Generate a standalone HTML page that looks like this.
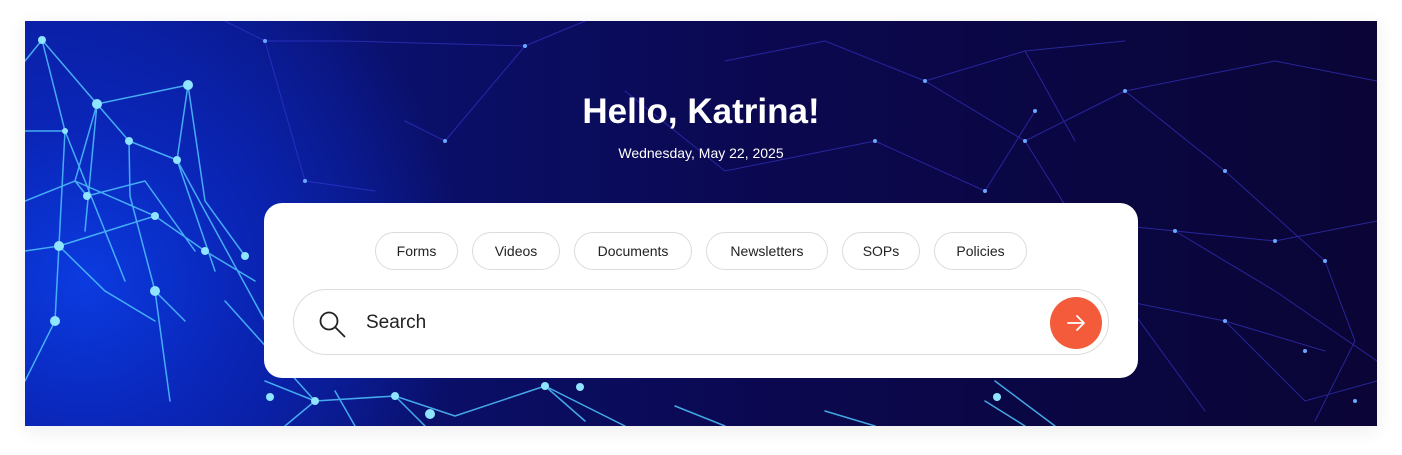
<!DOCTYPE html>
<html><head><meta charset="utf-8"><style>
*{margin:0;padding:0;box-sizing:border-box}
body{width:1402px;height:455px;background:#fff;font-family:"Liberation Sans",sans-serif;position:relative;overflow:hidden}
.banner{position:absolute;left:25px;top:21px;width:1352px;height:405px;overflow:hidden;
background:radial-gradient(ellipse 380px 380px at 60px 260px,#0b3be0 0%,#0a26b8 40%,rgba(10,20,120,0) 100%),linear-gradient(90deg,#0a1a98 0%,#0a0f68 30%,#0b0850 55%,#0a0535 100%);
box-shadow:0 4px 18px rgba(0,0,0,.08)}
svg.net{position:absolute;left:0;top:0}
h1{position:absolute;left:0;width:1402px;top:92px;text-align:center;color:#fff;font-size:35px;font-weight:bold}
.date{position:absolute;left:0;width:1402px;top:145px;text-align:center;color:#fff;font-size:14px}
.card{position:absolute;left:264px;top:203px;width:874px;height:175px;background:#fff;border-radius:18px}
.pill{position:absolute;top:29px;height:38px;border:1px solid #dcdcdc;border-radius:19px;font-size:14px;color:#222;display:flex;align-items:center;justify-content:center}
.search{position:absolute;left:29px;top:86px;width:816px;height:66px;border:1px solid #dcdcdc;border-radius:33px}
.search span{position:absolute;left:72px;top:22px;font-size:19px;color:#222}
.go{position:absolute;right:6px;top:7px;width:52px;height:52px;border-radius:50%;background:#f35b3a}
</style></head><body>
<div class="banner">
<svg class="net" width="1352" height="405" stroke-linecap="round">
<g stroke="#4fc4ff" stroke-width="1.5" opacity=".85" fill="none">
<path d="M17 19L72 83L163 64M17 19L0 40M72 83L50 160L0 180M72 83L104 120L152 139L190 250M163 64L152 139L104 120M163 64L180 180L220 235M50 160L130 195L180 230M17 19L40 110L30 300M104 120L105 175L130 270L160 300M0 230L34 225L80 270L130 300M30 300L0 360M130 270L145 380M50 160L62 175L120 160M152 139L240 300M180 230L230 260M200 280L290 380M0 110L40 110L100 260M72 83L60 210M120 160L170 230M34 225L130 195"/>
<path d="M240 360L290 380L370 375L430 395M370 375L400 405M290 380L260 405M430 395L520 365L560 400M520 365L600 405M650 385L700 405M800 390L850 405M960 380L1000 405M970 360L1030 405M310 370L330 405"/>
</g>
<g stroke="#3a3ad8" stroke-width="1" opacity=".6" fill="none">
<path d="M200 0L240 20L320 20L500 25L560 0M240 20L280 160L350 170M500 25L420 120L380 100M700 40L800 20L900 60L1000 30L1100 20M900 60L1000 120L1100 70L1200 150L1300 240M1000 120L1050 200L1150 210L1250 220L1352 200M1100 70L1250 40L1352 60M1050 200L1100 280L1200 300L1300 330M1150 210L1250 270L1352 340M850 120L960 170L1010 90M600 70L700 150L800 130L850 120M1000 30L1050 120M1200 300L1280 380L1352 360M1100 280L1180 390M1300 240L1330 320L1290 400"/>
</g>
<g fill="#8fe4ff">
<circle cx="17" cy="19" r="4"/><circle cx="72" cy="83" r="5"/><circle cx="163" cy="64" r="5"/><circle cx="104" cy="120" r="4"/><circle cx="152" cy="139" r="4"/><circle cx="62" cy="175" r="4"/><circle cx="34" cy="225" r="5"/><circle cx="130" cy="270" r="5"/><circle cx="180" cy="230" r="4"/><circle cx="220" cy="235" r="4"/><circle cx="30" cy="300" r="5"/><circle cx="290" cy="380" r="4"/><circle cx="370" cy="375" r="4"/><circle cx="405" cy="393" r="5"/><circle cx="520" cy="365" r="4"/><circle cx="555" cy="366" r="4"/><circle cx="245" cy="376" r="4"/><circle cx="972" cy="376" r="4"/><circle cx="40" cy="110" r="3"/><circle cx="130" cy="195" r="4"/>
</g>
<g fill="#6aa8ff">
<circle cx="500" cy="25" r="2"/><circle cx="240" cy="20" r="2"/><circle cx="900" cy="60" r="2"/><circle cx="1000" cy="120" r="2"/><circle cx="1100" cy="70" r="2"/><circle cx="1050" cy="200" r="2"/><circle cx="1150" cy="210" r="2"/><circle cx="1250" cy="220" r="2"/><circle cx="1200" cy="150" r="2"/><circle cx="1300" cy="240" r="2"/><circle cx="1100" cy="280" r="2"/><circle cx="1200" cy="300" r="2"/><circle cx="1280" cy="330" r="2"/><circle cx="850" cy="120" r="2"/><circle cx="960" cy="170" r="2"/><circle cx="420" cy="120" r="2"/><circle cx="280" cy="160" r="2"/><circle cx="1010" cy="90" r="2"/><circle cx="1330" cy="380" r="2"/>
</g>
</svg>
</div>
<h1>Hello, Katrina!</h1>
<div class="date">Wednesday, May 22, 2025</div>
<div class="card">
<div class="pill" style="left:111px;width:83px">Forms</div>
<div class="pill" style="left:208px;width:88px">Videos</div>
<div class="pill" style="left:310px;width:118px">Documents</div>
<div class="pill" style="left:442px;width:122px">Newsletters</div>
<div class="pill" style="left:578px;width:78px">SOPs</div>
<div class="pill" style="left:670px;width:93px">Policies</div>
<div class="search">
<svg style="position:absolute;left:24px;top:20px" width="30" height="30" viewBox="0 0 30 30" fill="none" stroke="#222" stroke-width="1.8"><circle cx="11" cy="11" r="8.5"/><path d="M17.5 17.5L27 27"/></svg>
<span>Search</span>
<div class="go"><svg width="52" height="52" viewBox="0 0 52 52" fill="none" stroke="#fff" stroke-width="1.8" stroke-linecap="round" stroke-linejoin="round"><path d="M18 26H34M27 19L34 26L27 33"/></svg></div>
</div>
</div>
</body></html>
